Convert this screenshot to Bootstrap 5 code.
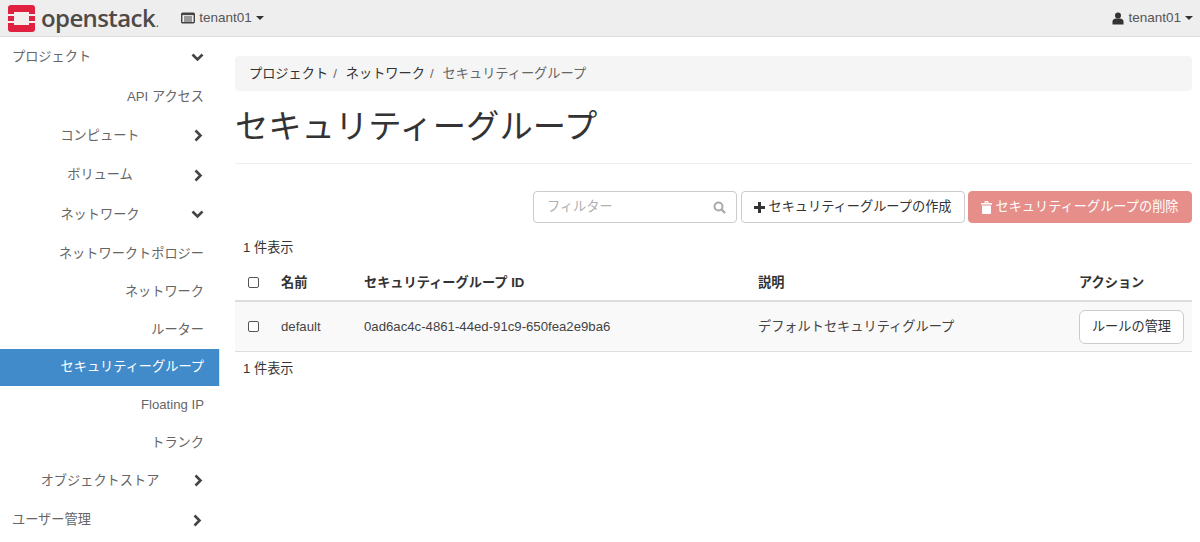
<!DOCTYPE html>
<html lang="ja">
<head>
    <meta charset="UTF-8">
    <meta name="viewport" content="width=device-width, initial-scale=1.0">
    <title>セキュリティーグループ</title>
    <link href="https://cdn.jsdelivr.net/npm/bootstrap@5.3.0/dist/css/bootstrap.min.css" rel="stylesheet">
    <style>
        html, body { height: 542px; overflow: hidden; }
        body { font-family: "Liberation Sans", "Noto Sans CJK JP", sans-serif; font-size: 13.2px; color: #333; }
        .top-bar { height: 37px; padding: 0; background: #eee; border-bottom: 1px solid #ddd; color: #555; }
        .brand { font-family: "Open Sans", "Liberation Sans", sans-serif; font-size: 24px; font-weight: 600; letter-spacing: -0.6px; color: #4f4a48; line-height: 1; }
        .brand small { font-size: 10px; margin-left: 1px; }
        .brand-logo { margin: 0 6px 0 8px; }
        .top-item { color: #555; font-size: 13.5px; }
        .caret { width: 0; height: 0; border-left: 4.5px solid transparent; border-right: 4.5px solid transparent; border-top: 4.5px solid #333; }
        .side { width: 220px; flex: none; color: #666; padding-top: 0.6px; }
        .side a { display: flex; align-items: center; color: #666; text-decoration: none; }
        .lvl1 { height: 39.5px; padding-left: 12px; justify-content: space-between; padding-right: 16px; }
        .lvl1 svg[width="9"] { margin-right: 2px; }
        .lvl2 { height: 39.3px; }
        .lvl2 span { width: 200px; text-align: center; }
        .lvl2 svg { margin-left: -6px; }
        .lvl3 { height: 37.6px; justify-content: flex-end; padding-right: 16px; }
        .lvl3.first { height: 39.2px; }
        .side a.active { background: #428bca; color: #fff; border-right: 1px solid #d7e6f3; padding-right: 15px; }
        .content { padding: 0 8px 0 15px; }
        .crumbs { background: #f5f5f5; border-radius: 4px; height: 35px; padding: 0 14px; margin: 19px 0 0; align-items: center; }
        .crumbs .breadcrumb-item { color: #666; }
        .crumbs .breadcrumb-item a { color: #333; text-decoration: none; }
        .crumbs .breadcrumb-item + .breadcrumb-item { padding-left: 5px; }
        .crumbs .breadcrumb-item + .breadcrumb-item::before { content: none; }
        .crumbs .sep { padding-left: 5px; padding-right: 4px; color: #666; }
        h1.page-title { font-size: 33.3px; font-weight: 400; line-height: 1.1; margin: 18px 0 0; border-bottom: 1px solid #eee; color: #333; height: 55px; }
        .toolbar { margin-top: 27px; gap: 4px; height: 32px; }
        .filter { width: 204px; height: 32px; border: 1px solid #ccc; border-radius: 4px; padding: 0 10px 0 13px; color: #b0b0b0; }
        .btn-tool { height: 32px; width: 224px; padding: 0; font-size: 13.2px; border: 1px solid #ccc; border-radius: 4px; color: #333; background: #fff; display: flex; align-items: center; justify-content: center; gap: 3px; }
        .btn-tool.btn-del, .btn-tool.btn-del:disabled { background: #e58e8a; border-color: #e58e8a; color: #fff; opacity: 1; margin-left: -1px; }
        .count { padding: 0 8px; line-height: 20px; }
        .sec-table { table-layout: fixed; width: 100%; margin: 0; --bs-table-color: #333; }
        .sec-table th, .sec-table td { padding: 7.5px 8px; vertical-align: middle; }
        .sec-table thead th { padding: 7px 8px 9px; line-height: 17px; border-bottom: 2px solid #ddd; font-weight: 700; }
        .sec-table tbody td { background: #f9f9f9; border-bottom: 1px solid #ddd; color: #444; }
        .box { display: block; width: 11px; height: 11px; border: 1px solid #555; border-radius: 2px; margin-left: 5px; background: #fff; }
        .btn-rule { height: 34px; width: 105px; font-size: 13.2px; color: #333; border: 1px solid #ccc; padding: 0; background: #fff; }
    </style>
</head>
<body>
    <!-- top navbar -->
    <nav class="navbar top-bar d-flex justify-content-between flex-nowrap">
        <div class="d-flex align-items-center">
            <svg class="brand-logo" width="27" height="27" viewBox="0 0 27 27">
                <rect width="27" height="27" rx="3" fill="#e0213f"/>
                <rect x="6" y="7" width="15" height="13" fill="#f4efef"/>
                <rect x="0" y="9" width="6" height="2" fill="#f4efef"/>
                <rect x="0" y="16" width="6" height="2" fill="#f4efef"/>
                <rect x="21" y="9" width="6" height="2" fill="#f4efef"/>
                <rect x="21" y="16" width="6" height="2" fill="#f4efef"/>
            </svg>
            <span class="brand">openstack<small>.</small></span>
            <div class="top-item d-flex align-items-center gap-1" style="margin-left:23px">
                <svg width="14" height="12" viewBox="0 0 14 12"><rect x="0.7" y="1.2" width="12.6" height="9.6" rx="1" fill="none" stroke="#444" stroke-width="1.4"/><path d="M0.7 2.2h12.6" stroke="#444" stroke-width="1.8"/><path d="M3 5h8M3 7h8M3 9h8" stroke="#444" stroke-width="1"/></svg>
                <span>tenant01</span>
                <span class="caret"></span>
            </div>
        </div>
        <div class="top-item d-flex align-items-center gap-1" style="margin-right:7px">
            <svg width="12" height="13" viewBox="0 0 12 13"><circle cx="6" cy="3.5" r="3" fill="#333"/><path d="M0.5 12.5v-3c0-2 2-3 3.5-3h4c1.5 0 3.5 1 3.5 3v3z" fill="#333"/></svg>
            <span>tenant01</span>
            <span class="caret"></span>
        </div>
    </nav>

    <div class="d-flex">
        <!-- side menu -->
        <div class="side">
            <a href="#" class="lvl1"><span>プロジェクト</span><svg width="13" height="9" viewBox="0 0 13 9"><path d="M1.5 1.5l5 5 5-5" fill="none" stroke="#444" stroke-width="2.6"/></svg></a>
            <a href="#" class="lvl3 first">API アクセス</a>
            <a href="#" class="lvl2"><span>コンピュート</span><svg width="9" height="13" viewBox="0 0 9 13"><path d="M1.5 1.5l5 5-5 5" fill="none" stroke="#444" stroke-width="2.6"/></svg></a>
            <a href="#" class="lvl2"><span>ボリューム</span><svg width="9" height="13" viewBox="0 0 9 13"><path d="M1.5 1.5l5 5-5 5" fill="none" stroke="#444" stroke-width="2.6"/></svg></a>
            <a href="#" class="lvl2"><span>ネットワーク</span><svg width="13" height="9" viewBox="0 0 13 9" style="margin-left:-9px"><path d="M1.5 1.5l5 5 5-5" fill="none" stroke="#444" stroke-width="2.6"/></svg></a>
            <a href="#" class="lvl3 first">ネットワークトポロジー</a>
            <a href="#" class="lvl3">ネットワーク</a>
            <a href="#" class="lvl3">ルーター</a>
            <a href="#" class="lvl3 active">セキュリティーグループ</a>
            <a href="#" class="lvl3">Floating IP</a>
            <a href="#" class="lvl3">トランク</a>
            <a href="#" class="lvl2"><span>オブジェクトストア</span><svg width="9" height="13" viewBox="0 0 9 13"><path d="M1.5 1.5l5 5-5 5" fill="none" stroke="#444" stroke-width="2.6"/></svg></a>
            <a href="#" class="lvl1"><span>ユーザー管理</span><svg width="9" height="13" viewBox="0 0 9 13"><path d="M1.5 1.5l5 5-5 5" fill="none" stroke="#444" stroke-width="2.6"/></svg></a>
        </div>

        <!-- main -->
        <div class="content flex-grow-1">
            <ol class="breadcrumb crumbs">
                <li class="breadcrumb-item"><a href="#">プロジェクト</a><span class="sep">/</span></li>
                <li class="breadcrumb-item"><a href="#">ネットワーク</a><span class="sep">/</span></li>
                <li class="breadcrumb-item active">セキュリティーグループ</li>
            </ol>
            <h1 class="page-title">セキュリティーグループ</h1>

            <div class="toolbar d-flex justify-content-end">
                <div class="filter d-flex align-items-center justify-content-between">
                    <span>フィルター</span>
                    <svg width="13" height="13" viewBox="0 0 13 13"><circle cx="5.5" cy="5.5" r="4" fill="none" stroke="#aaa" stroke-width="2"/><path d="M8.5 8.5l3.5 3.5" stroke="#aaa" stroke-width="2.4"/></svg>
                </div>
                <button class="btn btn-tool">
                    <svg width="11" height="11" viewBox="0 0 11 11"><path d="M4 0h3v4h4v3H7v4H4V7H0V4h4z" fill="#333"/></svg>
                    セキュリティーグループの作成
                </button>
                <button class="btn btn-tool btn-del" disabled>
                    <svg width="11" height="13" viewBox="0 0 11 13"><path d="M3.5 2V1a1 1 0 0 1 1-1h2a1 1 0 0 1 1 1v1H11v1.5H0V2zM4.7 1.2V2h1.6v-.8zM1 4.5h9V12a1 1 0 0 1-1 1H2a1 1 0 0 1-1-1z" fill="#fff" fill-rule="evenodd"/></svg>
                    セキュリティーグループの削除
                </button>
            </div>

            <div class="count" style="margin-top:15px">1 件表示</div>
            <table class="table sec-table" style="margin-top:9px">
                <colgroup><col style="width:38px"><col style="width:83px"><col style="width:394px"><col style="width:321px"><col></colgroup>
                <thead>
                    <tr>
                        <th><span class="box"></span></th>
                        <th>名前</th>
                        <th>セキュリティーグループ ID</th>
                        <th>説明</th>
                        <th>アクション</th>
                    </tr>
                </thead>
                <tbody>
                    <tr>
                        <td><span class="box"></span></td>
                        <td>default</td>
                        <td>0ad6ac4c-4861-44ed-91c9-650fea2e9ba6</td>
                        <td>デフォルトセキュリティグループ</td>
                        <td><button class="btn btn-rule">ルールの管理</button></td>
                    </tr>
                </tbody>
            </table>
            <div class="count" style="margin-top:7px">1 件表示</div>
        </div>
    </div>

    <script src="https://cdn.jsdelivr.net/npm/bootstrap@5.3.0/dist/js/bootstrap.bundle.min.js"></script>
</body>
</html>
